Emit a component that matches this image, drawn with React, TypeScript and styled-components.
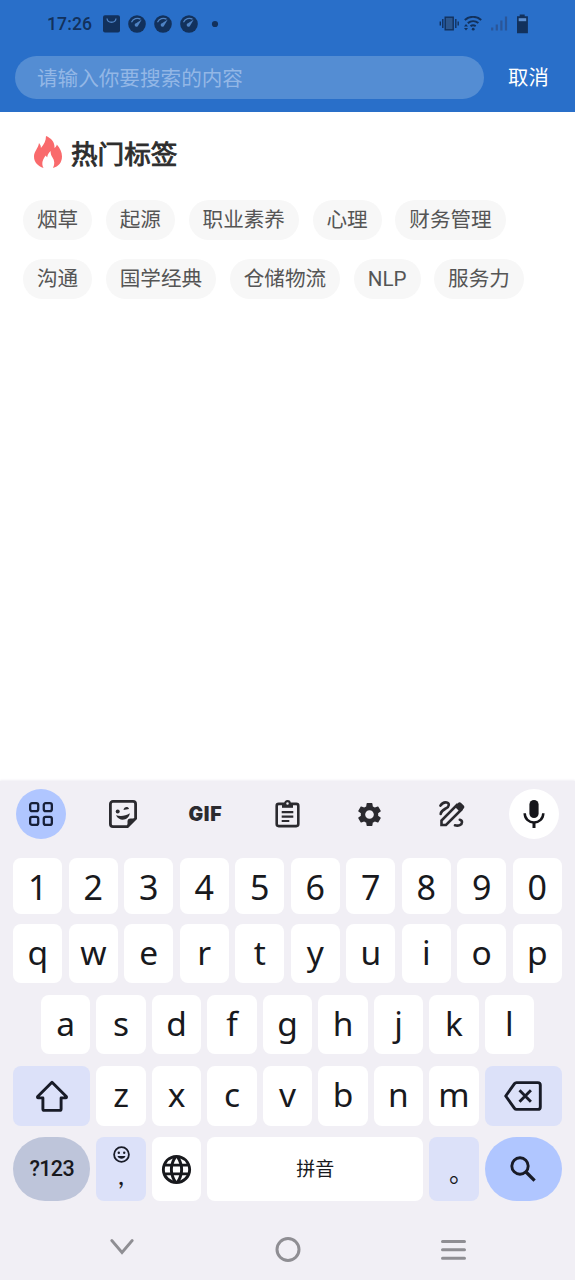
import React from 'react';
import styled, { createGlobalStyle, css } from 'styled-components';
import { MdLanguage, MdSettings } from 'react-icons/md';

const Global = createGlobalStyle`
  * { box-sizing: border-box; }
  body { margin: 0; background: #fff; font-family: Roboto, "Noto Sans CJK SC", sans-serif; }
  svg { display: block; flex: none; }
`;

const Screen = styled.div`
  width: 575px;
  height: 1280px;
  display: flex;
  flex-direction: column;
  overflow: hidden;
  background: #fff;
`;

const Header = styled.header`
  height: 112px;
  flex: none;
  background: #296fc9;
`;

const StatusBar = styled.div`
  height: 56px;
  padding: 0 46px 8px 47px;
  display: flex;
  align-items: center;
  justify-content: space-between;
  color: #12315c;
`;

const StatusGroup = styled.div<{ $gap: number }>`
  display: flex;
  align-items: center;
  gap: ${(p) => p.$gap}px;
`;

const Clock = styled.span`
  font-size: 17.6px;
  line-height: 20px;
  letter-spacing: 0.1px;
  width: 48px;
  font-weight: 500;
`;

const SearchRow = styled.div`
  display: flex;
  align-items: center;
  padding-left: 15px;
`;

const SearchField = styled.div`
  width: 469px;
  height: 43px;
  border-radius: 22px;
  padding: 2px 0 0 22px;
  background: #548dd3;
  color: #93b7e6;
  font-size: 20.6px;
  line-height: 43px;
`;

const Cancel = styled.button`
  border: 0;
  padding: 0;
  margin-left: 24px;
  background: none;
  color: #fff;
  font: inherit;
  font-size: 20.4px;
  line-height: 40px;
`;

const Content = styled.main`
  height: 669px;
  flex: none;
  padding: 22px 23px 0;
`;

const Title = styled.h1`
  display: flex;
  align-items: center;
  gap: 9px;
  margin: 0 0 26px;
  padding-left: 11px;
  height: 40px;
  color: #2d2d2d;
  font-size: 26.6px;
  line-height: 40px;
  font-weight: 400;
  -webkit-text-stroke: 0.9px #2d2d2d;

  span { padding-top: 2px; }
  svg { margin-bottom: 3px; }
`;

const TagRow = styled.div`
  display: flex;
  gap: 13.6px;
  margin-bottom: 19px;
`;

const Tag = styled.span`
  height: 40px;
  padding: 0 14px;
  border-radius: 20px;
  background: #f7f7f7;
  color: #555;
  font-size: 20.6px;
  line-height: 40px;
  white-space: nowrap;
`;

const Keyboard = styled.section`
  flex: 1;
  background: #f1eff5;
  box-shadow: 0 -1px 2px #f1eff5;
`;

const Toolbar = styled.div`
  height: 77px;
  display: grid;
  grid-template-columns: repeat(7, 1fr);
  justify-items: center;
  padding-top: 8px;
`;

const Tool = styled.div<{ $bg?: string }>`
  width: 50px;
  height: 50px;
  border-radius: 50%;
  display: flex;
  align-items: center;
  justify-content: center;
  background: ${(p) => p.$bg ?? 'transparent'};
  color: #2b2a2f;
`;

const GifLabel = styled.span`
  font: 900 19.5px/24px Inter, sans-serif;
  letter-spacing: 0.7px;
`;

const KeyRow = styled.div<{ $height: number; $bottom: number }>`
  height: ${(p) => p.$height}px;
  margin-bottom: ${(p) => p.$bottom}px;
  padding: 0 13px;
  display: flex;
  justify-content: center;
  gap: 6.2px;
`;

type KeyTone = 'plain' | 'soft' | 'muted' | 'accent';

const tones: Record<KeyTone, string> = {
  plain: '#fff',
  soft: '#dce1f9',
  muted: '#bec5da',
  accent: '#b0c6ff',
};

const Key = styled.div<{ $width?: number; $tone?: KeyTone; $round?: boolean }>`
  width: ${(p) => p.$width ?? 49.3}px;
  flex: none;
  display: flex;
  align-items: center;
  justify-content: center;
  border-radius: ${(p) => (p.$round ? 32 : 8)}px;
  background: ${(p) => tones[p.$tone ?? 'plain']};
  color: #18191d;
`;

const DigitKey = styled(Key)`
  padding-top: 1px;
  font: 400 34px/40px "Noto Sans", sans-serif;
`;

const LetterKey = styled(Key)`
  padding-bottom: 4px;
  font: 400 33.5px/40px "Noto Sans", sans-serif;
`;

const CommaKey = styled(Key)`
  flex-direction: column;
  justify-content: flex-start;
  padding-top: 9px;
`;

const smallText = css`
  line-height: 24px;
  color: #18191d;
`;

const SymbolLabel = styled.span`
  ${smallText}
  font-size: 21.5px;
  font-weight: 500;
  letter-spacing: -0.6px;
`;

const SpaceLabel = styled.span`
  ${smallText}
  font-size: 19px;
  padding-top: 2px;
`;

const Comma = styled.span`
  ${smallText}
  font-family: Lato, sans-serif;
  font-size: 27px;
  margin-top: 0;
`;

const FullStop = styled.span`
  ${smallText}
  font-family: "Noto Sans CJK SC", sans-serif;
  font-size: 25px;
  width: 10px;
  margin: 3px 0 0;
`;

const NavBar = styled.nav`
  height: 79px;
  padding: 18px 38px 0 39px;
  display: grid;
  grid-template-columns: repeat(3, 1fr);
  justify-items: center;
`;

const GaugeIcon = () => (
  <svg width="18" height="18" viewBox="0 0 18 18">
    <circle cx="9" cy="9" r="8.8" fill="#12315c" />
    <path d="M3.5 7.2C5 3.6 9.4 2.4 12.5 4.1" fill="none" stroke="#4f83c4" strokeWidth="1.2" />
    <path d="M13.8 4.6 10.2 10.4a1.8 1.8 0 1 1-2.1-2.2z" fill="#4f83c4" />
  </svg>
);

const StatusIcons = () => (
  <StatusBar>
    <StatusGroup $gap={8}>
      <Clock>17:26</Clock>
      <svg width="17" height="18" viewBox="0 0 17 18">
        <rect y=".3" width="17" height="17.2" rx="2" fill="#12315c" />
        <path d="M4 3.5c.7 5 8.3 5 9 0" fill="none" stroke="#4f83c4" strokeWidth="1.3" />
      </svg>
      <GaugeIcon />
      <GaugeIcon />
      <GaugeIcon />
      <svg width="22" height="18" viewBox="0 0 22 18">
        <circle cx="9" cy="9" r="3.1" fill="#12315c" />
      </svg>
    </StatusGroup>
    <StatusGroup $gap={5}>
      <svg width="20" height="16" viewBox="0 0 20 16">
        <rect x="6.2" y="1.2" width="8" height="12.6" fill="#2c578f" stroke="#12315c" strokeWidth="1.4" />
        <path d="M3.8 3v9M1.3 5.500v4M16.800 3v9M19.200 5.500v4" stroke="#12315c" strokeWidth="1.4" />
      </svg>
      <svg width="18" height="16" viewBox="0 0 18 16" fill="none" stroke="#12315c" strokeWidth="2">
        <path d="M.8 4C5.500-.2 12.500-.2 17.200 4M3.800 7.100c3.200-2.600 7.500-2.600 10.600 0M6.500 10.100c1.700-1.200 3.500-1.200 5.200 0" />
        <circle cx="9.200" cy="13.200" r="1.400" fill="#12315c" stroke="none" />
        <path d="m0 10.500 2-2.500 2 2.500zM0 12l2 2.500L4 12z" fill="#12315c" stroke="none" />
      </svg>
      <svg width="25" height="16" viewBox="0 0 25 16" stroke="#2a5699" strokeWidth="2.2">
        <path d="M5.200 14.500v-3M9.800 14.500v-6M14.400 14.500v-10M19 14.500v-14" />
      </svg>
      <svg width="12" height="20" viewBox="0 0 12 20">
        <path d="M2.700.5h5v1.700h3.200v17H0v-17h2.700z" fill="#12315c" />
        <path d="M1.700 4.200h7.500v3H1.700z" fill="#5d8fd0" />
      </svg>
    </StatusGroup>
  </StatusBar>
);

const FlameIcon = () => (
  <svg width="28" height="33" viewBox="0 0 28 33">
    <path
      fill="#f96a6c"
      d="M12 0C17 2 21 6 20.500 12 21.800 11 22.700 9.800 22.800 8.500 26 12 28 16 28 20.500 28 26.500 24.500 30.500 19 32 21 28 20.500 24.500 18.500 21.500 17.200 19.500 16.500 17.500 16.600 15 14.500 17 13.500 18.800 13.200 21.200 12.600 20.800 12 20.200 11.800 19.500 9 23 7 27 9.500 32 4 30 0 26.500 0 20.500 0 15.500 4.200 12.500 5 7 6.300 8.500 7 10 6.900 12 10 8.500 12 5 12 0Z"
    />
  </svg>
);

const GridIcon = () => (
  <svg width="24" height="24" viewBox="0 0 25 25" fill="none" stroke="#172039" strokeWidth="2.4">
    <rect x="1.200" y="1.200" width="8.400" height="8.400" rx="2" />
    <rect x="15.400" y="1.200" width="8.400" height="8.400" rx="2" />
    <rect x="1.200" y="15.400" width="8.400" height="8.400" rx="2" />
    <rect x="15.400" y="15.400" width="8.400" height="8.400" rx="2" />
  </svg>
);

const StickerIcon = () => (
  <svg width="28" height="28" viewBox="0 0 28 28">
    <path d="M4 1.400h20a2.600 2.600 0 0 1 2.600 2.600v14.500l-8.100 8.100H4A2.600 2.600 0 0 1 1.400 24V4A2.600 2.600 0 0 1 4 1.400z" fill="none" stroke="currentColor" strokeWidth="2.800" />
    <path d="M26.500 18.500h-5a3 3 0 0 0-3 3v5z" fill="currentColor" />
    <path d="M7 15.300c4.700 1.400 9.400.8 13.800-2-.8 7.400-10.600 8.800-13.800 2z" fill="currentColor" />
    <circle cx="8.700" cy="11.400" r="2" fill="currentColor" />
    <path d="M14.500 10.100c.3-3.600 4.800-4.200 5.500-1.100z" fill="currentColor" />
  </svg>
);

const ClipboardIcon = () => (
  <svg width="25" height="28" viewBox="0 0 25 28" fill="none" stroke="currentColor" strokeWidth="2.6">
    <rect x="1.700" y="3.900" width="21.600" height="22.200" rx="2" />
    <path d="M7 3.200h11v4.600H7z" fill="currentColor" stroke="none" />
    <circle cx="12.500" cy="3.400" r="2.300" fill="#f1eff5" strokeWidth="2.100" />
    <path d="M6.700 12.200h11.600M6.700 16.600h11.600M6.700 21h7.600" strokeWidth="2.200" />
  </svg>
);

const PenIcon = () => (
  <svg width="26" height="26" viewBox="0 0 26 26" fill="none" stroke="currentColor" strokeWidth="2.6">
    <path d="M2.500 24v-4.500L17.800 4.200l4.500 4.500L7 24z" />
    <path d="m15.500 5.500 3.500-3.500c1-1 2.200-1 3.100-.1l2.600 2.600c.9.900.9 2.100 0 3l-3.600 3.600z" fill="currentColor" stroke="none" />
    <path d="M1.500 4.600C3.300 2 5.800 1.100 7.700 1.600c3.200.8 2.400 4-.4 5.600-2.600 1.500-5.400 2.600-5.600 5.800M16 24.300c3.500 1 7-.6 7-3.100 0-1.700-1-2.300-2.200-2.500" strokeLinecap="round" />
  </svg>
);

const MicIcon = () => (
  <svg width="22" height="29" viewBox="0 0 22 29" fill="none" stroke="#15151a" strokeWidth="2.500">
    <rect x="6.400" y="0" width="9.200" height="18" rx="4.600" fill="#15151a" stroke="none" />
    <path d="M1.700 13.300c0 5.500 4.100 9.200 9.300 9.200s9.300-3.700 9.300-9.200" />
    <path d="M11 22.500v5.500" strokeWidth="3" />
  </svg>
);

const ShiftIcon = () => (
  <svg width="34" height="32" viewBox="0 0 34 32">
    <path d="M17 2.200 31.300 16.500c.5.600.2 1.400-.6 1.400h-4.600v11a1.500 1.500 0 0 1-1.500 1.500H9.400a1.500 1.500 0 0 1-1.500-1.500v-11H3.300c-.8 0-1.100-.8-.6-1.400z" fill="none" stroke="#181b27" strokeWidth="2.900" strokeLinejoin="round" />
  </svg>
);

const BackspaceIcon = () => (
  <svg width="38" height="30" viewBox="0 0 38 30" fill="none" stroke="#181b27" strokeWidth="2.900">
    <path d="M12.500 1.600h21.300a2.500 2.500 0 0 1 2.500 2.500v21.800a2.500 2.500 0 0 1-2.500 2.500H12.500c-.9 0-1.500-.4-2-1.100L1.700 15l8.800-12.300c.5-.7 1.100-1.100 2-1.100z" strokeLinejoin="round" />
    <path d="m15.500 9.300 11.400 11.400M26.900 9.300 15.500 20.700" />
  </svg>
);

const SearchIcon = () => (
  <svg width="28" height="28" viewBox="0 0 28 28" fill="none" stroke="#181b27">
    <circle cx="11" cy="11" r="8.200" strokeWidth="2.900" />
    <path d="m17 17 8.600 8.600" strokeWidth="3.300" />
  </svg>
);

const SmileIcon = () => (
  <svg width="17" height="17" viewBox="0 0 17 17">
    <circle cx="8.500" cy="8.500" r="7.400" fill="none" stroke="#181b27" strokeWidth="1.800" />
    <circle cx="5.800" cy="6.700" r="1.200" fill="#181b27" />
    <circle cx="11.200" cy="6.700" r="1.200" fill="#181b27" />
    <path d="M4.500 10h8c-1 3.600-7 3.600-8 0z" fill="#181b27" />
  </svg>
);

const tagRows = [
  ['烟草', '起源', '职业素养', '心理', '财务管理'],
  ['沟通', '国学经典', '仓储物流', 'NLP', '服务力'],
];

const letterKeys = (letters: string) =>
  letters.split('').map((c) => <LetterKey key={c}>{c}</LetterKey>);

export default function App() {
  return (
    <Screen>
      <Global />
      <Header>
        <StatusIcons />
        <SearchRow>
          <SearchField>请输入你要搜索的内容</SearchField>
          <Cancel>取消</Cancel>
        </SearchRow>
      </Header>
      <Content>
        <Title>
          <FlameIcon />
          <span>热门标签</span>
        </Title>
        {tagRows.map((row) => (
          <TagRow key={row[0]}>
            {row.map((tag) => (
              <Tag key={tag}>{tag}</Tag>
            ))}
          </TagRow>
        ))}
      </Content>
      <Keyboard>
        <Toolbar>
          <Tool $bg="#b0c6ff"><GridIcon /></Tool>
          <Tool><StickerIcon /></Tool>
          <Tool><GifLabel>GIF</GifLabel></Tool>
          <Tool><ClipboardIcon /></Tool>
          <Tool><MdSettings size={29} /></Tool>
          <Tool><PenIcon /></Tool>
          <Tool $bg="#fff"><MicIcon /></Tool>
        </Toolbar>
        <KeyRow $height={56} $bottom={10}>
          {'1234567890'.split('').map((d) => (
            <DigitKey key={d}>{d}</DigitKey>
          ))}
        </KeyRow>
        <KeyRow $height={59} $bottom={12}>{letterKeys('qwertyuiop')}</KeyRow>
        <KeyRow $height={59} $bottom={12}>{letterKeys('asdfghjkl')}</KeyRow>
        <KeyRow $height={60} $bottom={11}>
          <Key $width={77} $tone="soft"><ShiftIcon /></Key>
          {letterKeys('zxcvbnm')}
          <Key $width={77} $tone="soft"><BackspaceIcon /></Key>
        </KeyRow>
        <KeyRow $height={64} $bottom={0}>
          <Key $width={77} $tone="muted" $round><SymbolLabel>?123</SymbolLabel></Key>
          <CommaKey $tone="soft">
            <SmileIcon />
            <Comma>,</Comma>
          </CommaKey>
          <Key><MdLanguage size={35} /></Key>
          <Key $width={215.7}><SpaceLabel>拼音</SpaceLabel></Key>
          <Key $tone="soft"><FullStop>。</FullStop></Key>
          <Key $width={77} $tone="accent" $round><SearchIcon /></Key>
        </KeyRow>
        <NavBar>
          <svg width="24" height="54" viewBox="0 0 24 54" fill="none" stroke="#8f8e93" strokeWidth="2.800">
            <path d="m1.800 21.500 10.200 12 10.200-12" strokeLinecap="round" />
          </svg>
          <svg width="26" height="60" viewBox="0 0 26 60" fill="none" stroke="#8f8e93" strokeWidth="3">
            <circle cx="13" cy="30.500" r="11" />
          </svg>
          <svg width="26" height="60" viewBox="0 0 26 60" stroke="#8f8e93" strokeWidth="3" strokeLinecap="round">
            <path d="M1.500 22.500h22M1.500 30.800h22M1.500 39.200h22" />
          </svg>
        </NavBar>
      </Keyboard>
    </Screen>
  );
}
